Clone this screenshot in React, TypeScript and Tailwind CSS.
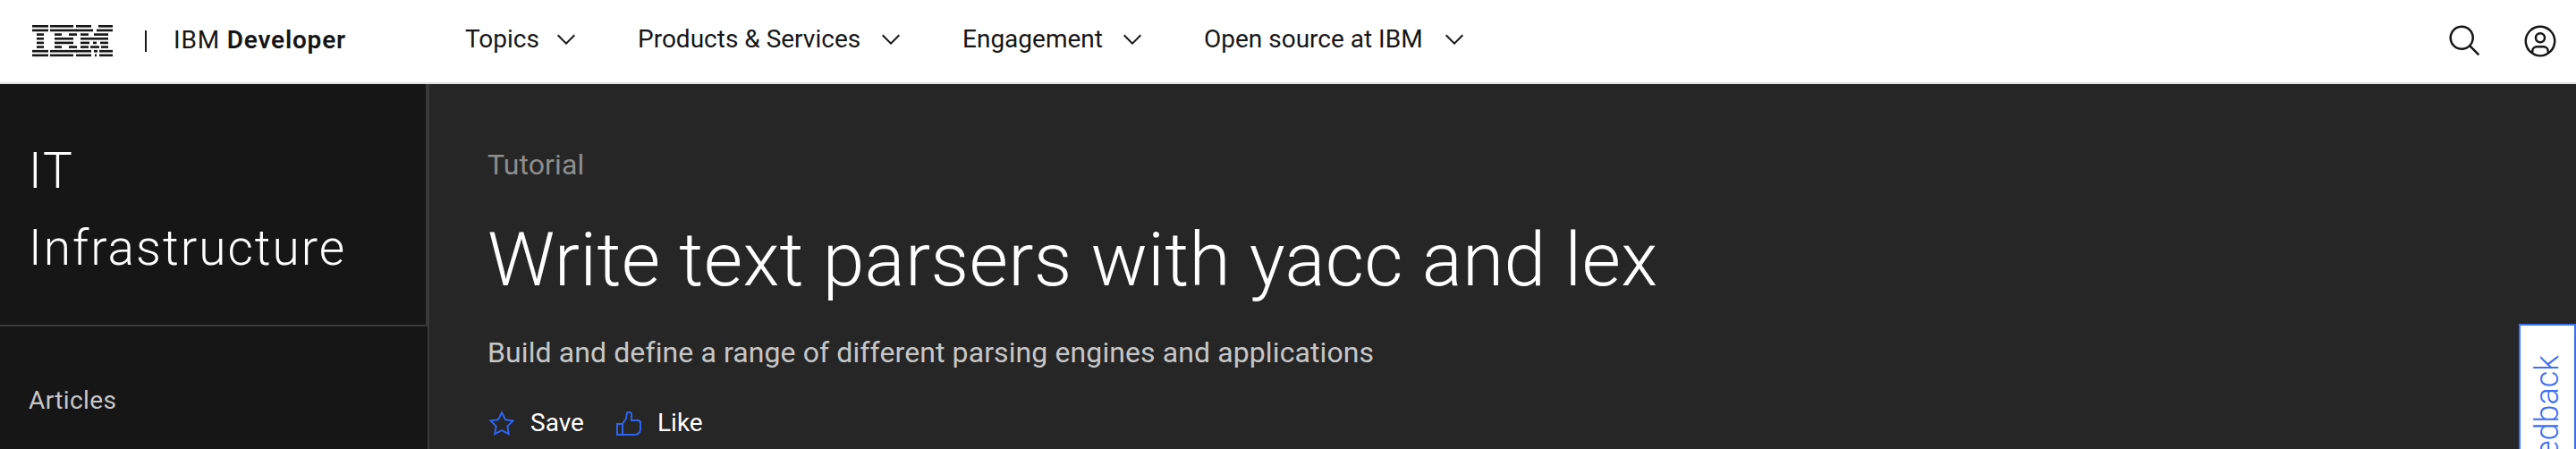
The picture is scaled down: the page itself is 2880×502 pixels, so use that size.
const font = "font-['Roboto','Noto_Sans',sans-serif]";

const logoRows: number[][] = [
  [0, 18, 20, 46, 49, 66, 74, 90],
  [0, 18, 20, 50, 49, 68, 72, 90],
  [5, 13, 25, 33, 41, 50, 54, 63, 69, 85],
  [5, 13, 25, 46, 54, 85],
  [5, 13, 25, 46, 54, 64, 68, 72, 76, 85],
  [5, 13, 25, 33, 41, 50, 54, 63, 65, 75, 77, 85],
  [0, 18, 20, 50, 49, 66, 69, 73, 75, 90],
  [0, 18, 20, 46, 49, 66, 70, 72, 75, 90],
];

function IbmLogo() {
  return (
    <svg width="90" height="36" viewBox="0 0 90 36" className="shrink-0">
      {logoRows.map((row, y) =>
        row.map((x, i) =>
          i % 2 === 0 ? (
            <rect key={`${y}-${i}`} x={x} y={y * 4.65} width={row[i + 1] - x} height="2.6" fill="#161616" />
          ) : null,
        ),
      )}
    </svg>
  );
}

function Chevron() {
  return (
    <svg width="32" height="32" viewBox="0 0 32 32" fill="#161616" className="shrink-0 mb-[4px]">
      <path d="M16 22L6 12l1.4-1.4 8.6 8.6 8.6-8.6L26 12z" />
    </svg>
  );
}

function NavItem({ label, width }: { label: string; width: string }) {
  return (
    <div className="flex items-center gap-[17px]">
      <span className={`${width} whitespace-nowrap pb-[4px] text-[#161616]`}>{label}</span>
      <Chevron />
    </div>
  );
}

export default function App() {
  return (
    <div className={`${font} relative h-[502px] w-[2880px] overflow-hidden bg-[#262626] text-[28px]`}>
      <header className="flex h-[94px] items-center border-b-2 border-[#e0e0e0] bg-white pl-[36px] pr-[20px]">
        <IbmLogo />
        <div className="ml-[36px] h-[24px] w-[2px] bg-[#161616]" />
        <div className="ml-[30px] w-[193px] whitespace-nowrap pb-[3px] tracking-[0.8px] text-[#161616]">
          IBM <span className="font-semibold">Developer</span>
        </div>
        <nav className="ml-[133px] flex gap-[64px]">
          <NavItem label="Topics" width="w-[80px]" />
          <NavItem label="Products & Services" width="w-[250px]" />
          <NavItem label="Engagement" width="w-[157px]" />
          <NavItem label="Open source at IBM" width="w-[247px]" />
        </nav>
        <div className="ml-auto flex items-center gap-[44px] text-[#161616]">
          <svg width="40" height="40" viewBox="0 0 32 32" fill="currentColor">
            <path d="M29,27.5859l-7.5521-7.5521a11.0177,11.0177,0,1,0-1.4141,1.4141L27.5859,29ZM4,13a9,9,0,1,1,9,9A9.01,9.01,0,0,1,4,13Z" />
          </svg>
          <svg width="40" height="40" viewBox="0 0 32 32" fill="currentColor">
            <path d="M16,8a5,5,0,1,0,5,5A5,5,0,0,0,16,8Zm0,8a3,3,0,1,1,3-3A3.0034,3.0034,0,0,1,16,16Z" />
            <path d="M16,2A14,14,0,1,0,30,16,14.0158,14.0158,0,0,0,16,2ZM10,26.3765V25a3.0033,3.0033,0,0,1,3-3h6a3.0033,3.0033,0,0,1,3,3v1.3765a11.8989,11.8989,0,0,1-12,0Zm13.9925-1.4507A5.0016,5.0016,0,0,0,19,20H13a5.0016,5.0016,0,0,0-4.9925,4.9258,12,12,0,1,1,15.985,0Z" />
          </svg>
        </div>
      </header>

      <div className="flex">
        <aside className="h-[408px] w-[480px] shrink-0 border-r-2 border-[#393939] bg-[#161616]">
          <div className="h-[271px] border-b-2 border-r-2 border-[#393939] pl-[32px] pt-[54px] text-[55px] font-light leading-[86px] tracking-[2px] text-white">
            IT
            <br />
            Infrastructure
          </div>
          <div className="pl-[32px] pt-[62px] tracking-[0.4px] text-[#c6c6c6]">Articles</div>
        </aside>

        <main className="pl-[65px]">
          <div className="mt-[68px] text-[32px] leading-[44px] tracking-[0.1px] text-[#8d8d8d]">Tutorial</div>
          <h1 className="mt-[35px] whitespace-nowrap text-[84px] font-light leading-[100px] tracking-[0.3px] text-white">
            Write text parsers with yacc and lex
          </h1>
          <p className="mt-[31px] whitespace-nowrap text-[32px] leading-[44px] tracking-[0.1px] text-[#c6c6c6]">
            Build and define a range of different parsing engines and applications
          </p>
          <div className="mt-[36px] flex items-center text-white">
            <svg width="32" height="32" viewBox="0 0 32 32" fill="#2f64f0">
              <path d="M16,6.52l2.76,5.58.46,1,1,.15,6.16.89L22,18.44l-.75.73.18,1,1.05,6.13-5.51-2.89L16,23l-.93.49L9.56,26.34l1-6.13.18-1L10,18.44,5.58,14.09l6.16-.89,1-.15.46-1L16,6.52M16,2l-4.55,9.22L1.28,12.69l7.36,7.18L6.9,30,16,25.22,25.1,30,23.36,19.87l7.36-7.17L20.55,11.22Z" />
            </svg>
            <span className="ml-[16px] w-[62px]">Save</span>
            <svg className="ml-[32px]" width="32" height="32" viewBox="0 0 32 32" fill="#2f64f0">
              <path d="M26,12H20V6a3.0033,3.0033,0,0,0-3-3H14.8672a2.0094,2.0094,0,0,0-1.98,1.7173l-.8453,5.9165L8.4648,16H2V30H23a7.0078,7.0078,0,0,0,7-7V16A4.0045,4.0045,0,0,0,26,12ZM8,28H4V18H8Zm20-5a5.0057,5.0057,0,0,1-5,5H10V17.3027l3.9578-5.9365L14.8672,5H17a1.0013,1.0013,0,0,1,1,1v8h8a2.0025,2.0025,0,0,1,2,2Z" />
            </svg>
            <span className="ml-[16px]">Like</span>
          </div>
        </main>
      </div>

      <div className="absolute left-[2816px] top-[362px] flex h-[200px] w-[64px] items-start justify-center border-2 border-[#3b6ff5] bg-white pt-[33px]">
        <span className="whitespace-nowrap text-[36px] font-light leading-[44px] text-[#3b6ff5] [writing-mode:vertical-rl] rotate-180">
          Feedback
        </span>
      </div>
    </div>
  );
}
